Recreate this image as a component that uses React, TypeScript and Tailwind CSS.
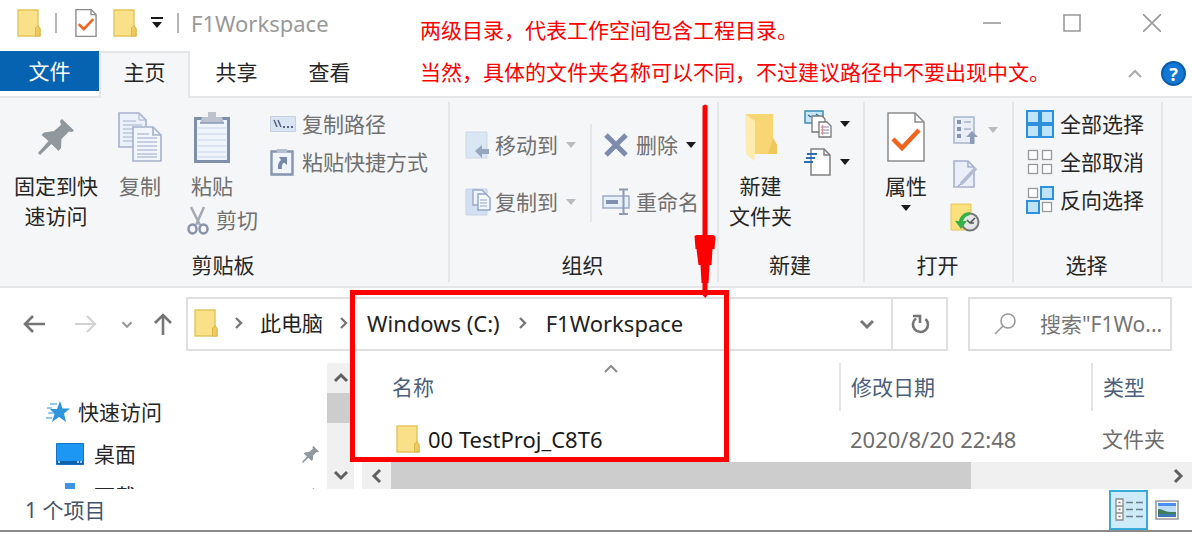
import type { ReactNode } from "react";

const chevronPaths = {
  up: "M2 9L8 3L14 9",
  down: "M2 3L8 9L14 3",
};

function Folder({ className = "w-6 h-7" }: { className?: string }) {
  return (
    <svg viewBox="0 0 24 28" className={`shrink-0 ${className}`} aria-hidden="true">
      <path d="M1 1h20v16l2 3v7H1z" fill="#fbe08a" stroke="#e3c35c" strokeWidth="1.4" />
      <path d="M18.5 27V19l2.5-2.5L23 20v7z" fill="#eecb5f" stroke="#dcb84c" />
    </svg>
  );
}

function Caret({ muted = false }: { muted?: boolean }) {
  return (
    <svg viewBox="0 0 10 6" className="w-2.5 h-1.5 shrink-0" aria-hidden="true">
      <path d="M0 0h10L5 6z" fill={muted ? "#b9bbbe" : "#1a1a1a"} />
    </svg>
  );
}

function Chevron({ dir, className }: { dir: "up" | "down"; className: string }) {
  return (
    <svg viewBox="0 0 16 12" className={`shrink-0 ${className}`} fill="none" stroke="currentColor" aria-hidden="true">
      <path d={chevronPaths[dir]} />
    </svg>
  );
}

function Crumb() {
  return (
    <svg viewBox="0 0 10 14" className="mx-4 w-2.5 h-3.5 shrink-0" aria-hidden="true">
      <path d="M2 2l5 5-5 5" fill="none" stroke="#777" strokeWidth="2.4" />
    </svg>
  );
}

function Pin({ className }: { className: string }) {
  return (
    <svg viewBox="0 0 36 36" className={className} aria-hidden="true">
      <path
        d="M24 0L36 11.500L34 13L31 12.500L23.500 20L23 29L20.500 32L13.500 25L2 36L0 34L10.500 22L3.500 16L6 13.500L16 12L23 6L22 2z"
        fill="#8f989c"
      />
    </svg>
  );
}

function CheckDoc({ className, thick }: { className: string; thick: number }) {
  return (
    <svg viewBox="0 0 38 50" className={className} fill="none" aria-hidden="true">
      <path d="M1 1h27l9 9v39H1z" fill="#fff" stroke="#8c8c8c" strokeWidth={thick} />
      <path d="M28 1v9h9" stroke="#8c8c8c" strokeWidth={thick} />
      <path d="M6 27l9 9 17-18" stroke="#f0641e" strokeWidth="4.5" />
    </svg>
  );
}

function CopyPages() {
  return (
    <svg viewBox="0 0 44 50" className="w-11 h-[50px]" fill="none" stroke="#a5b1cc" aria-hidden="true">
      <path d="M1 1h20l7 7v27H1z" fill="#eaf1fb" strokeWidth="1.600" />
      <path d="M21 1v7h7M5 9h13M5 13h19M5 17h19M5 21h19M5 25h19M5 29h19" />
      <path d="M15 15h20l8 8v26H15z" fill="#f1f6fd" strokeWidth="1.600" />
      <path d="M35 15v8h8" strokeWidth="1.600" />
      <path d="M19 22h12M19 26h20M19 30h20M19 34h20M19 38h20M19 42h20M19 45h20" stroke="#9aa8c4" />
    </svg>
  );
}

function Clipboard() {
  return (
    <svg viewBox="0 0 36 52" className="w-9 h-[52px]" aria-hidden="true">
      <path d="M1.500 7.500h33v43h-33z" fill="#f0f5fc" stroke="#7f8ea9" strokeWidth="3" />
      <path d="M4 17h28M4 23h28M4 29h28M4 35h28M4 41h28M4 46h28" stroke="#c6d4e8" />
      <path d="M8 6h6V1h8v5h6l2 6H6z" fill="#bcc3cf" />
      <path d="M6 12h24" stroke="#8796b0" strokeWidth="1.500" />
    </svg>
  );
}

function Scissors() {
  return (
    <svg viewBox="0 0 22 29" className="w-[22px] h-[29px]" fill="none" aria-hidden="true">
      <path d="M4 1l9 18M17 1L9 19" stroke="#a3a9b5" strokeWidth="2.500" />
      <ellipse cx="5.500" cy="23" rx="4" ry="4.500" stroke="#8993ab" strokeWidth="2.500" />
      <ellipse cx="16.500" cy="23" rx="4" ry="4.500" stroke="#8993ab" strokeWidth="2.500" />
    </svg>
  );
}

function CopyPath() {
  return (
    <svg viewBox="0 0 26 16" className="w-[26px] h-4" aria-hidden="true">
      <path d="M.5.500h25v15H.500z" fill="#dbe4f2" stroke="#c3cfe2" />
      <path d="M4 4l3 7M8 4l3 7" stroke="#56627e" strokeWidth="1.500" />
      <path d="M13 10h2v2h-2zM17 10h2v2h-2zM21 10h2v2h-2z" fill="#56627e" />
    </svg>
  );
}

function PasteShortcut() {
  return (
    <svg viewBox="0 0 24 28" className="w-6 h-7" aria-hidden="true">
      <path d="M1.500 3.500h21v23h-21z" fill="#f0f5fc" stroke="#8594b0" strokeWidth="2.400" />
      <path d="M7 1h10v4H7z" fill="#b6bfce" />
      <path d="M9 9h8v8l-3-2.500c-2 1.500-2.500 3.500-2 6.500H8c-.5-4 .5-7 3-9z" fill="#7787ab" />
    </svg>
  );
}

function MoveTo() {
  return (
    <svg viewBox="0 0 24 28" className="w-6 h-7" aria-hidden="true">
      <path d="M1 1h21v26H1z" fill="#dbe6f4" stroke="#cad7e8" />
      <path d="M10 20l7-6v4h7v5h-7v4z" fill="#96a6bd" />
    </svg>
  );
}

function CopyTo() {
  return (
    <svg viewBox="0 0 26 28" className="w-[26px] h-7" fill="none" aria-hidden="true">
      <path d="M1 1h21v26H1z" fill="#d3e0f1" stroke="#c6d4e8" />
      <path d="M8 2h9l3 3v12H8z" fill="#eef4fc" stroke="#9aabc9" strokeWidth="1.400" />
      <path d="M13 6h8l4 4v12H13z" fill="#f4f8fe" stroke="#92a4c4" strokeWidth="1.400" />
      <path d="M15 12h7M15 15h7M15 18h7" stroke="#92a4c4" />
    </svg>
  );
}

function Cross() {
  return (
    <svg viewBox="0 0 24 24" className="w-6 h-6" aria-hidden="true">
      <path d="M2 2l20 20M22 2L2 22" stroke="#7d8bad" strokeWidth="5" />
    </svg>
  );
}

function Rename() {
  return (
    <svg viewBox="0 0 28 28" className="w-7 h-7" fill="none" aria-hidden="true">
      <path d="M1 8h26v12H1z" fill="#e7eff9" stroke="#9dacc8" strokeWidth="1.500" />
      <path d="M4 12h12v4H4z" fill="#8090ae" />
      <path d="M17 1.500h9M17 26h9M21.500 2v24" stroke="#8c9ab5" strokeWidth="2" />
    </svg>
  );
}

function OpenFolder() {
  return (
    <svg viewBox="0 0 34 50" className="w-[34px] h-[50px]" aria-hidden="true">
      <path d="M2 2h27v24l4 7v9H9z" fill="#f8d674" />
      <path d="M29 26l4 7v9H24z" fill="#f0c75c" />
      <path d="M1 2l10 7v33l-1 7-8-7z" fill="#fdebaf" />
    </svg>
  );
}

function NewItem() {
  return (
    <svg viewBox="0 0 28 28" className="w-7 h-7" fill="none" aria-hidden="true">
      <path d="M1 1h18v12H1z" fill="#c9e7f7" stroke="#3f8db5" strokeWidth="1.500" />
      <path d="M4 5l3 2M12 4l4 3" stroke="#2c6d99" strokeWidth="1.500" />
      <path d="M8 6h10l3 3v13H8z" fill="#fff" stroke="#777" strokeWidth="1.300" />
      <path d="M15 12h8l4 4v11H15z" fill="#fff" stroke="#777" strokeWidth="1.300" />
      <path d="M17 17h8M17 20h8M17 23h8" stroke="#7d86b4" />
      <path d="M18.500 15v10" stroke="#d58a8a" />
    </svg>
  );
}

function EasyAccess() {
  return (
    <svg viewBox="0 0 28 28" className="w-7 h-7" fill="none" aria-hidden="true">
      <path d="M7 1h13l6 6v20H7z" fill="#fff" stroke="#808080" strokeWidth="1.500" />
      <path d="M20 1v6h6" stroke="#808080" strokeWidth="1.500" />
      <path d="M3 6h10M2 10h9M0 14h9" stroke="#2a6fb5" strokeWidth="2" />
    </svg>
  );
}

function OpenWith() {
  return (
    <svg viewBox="0 0 26 28" className="w-[26px] h-7" fill="none" aria-hidden="true">
      <path d="M1 1h20v26H1z" fill="#e9eef8" stroke="#a9b5cd" strokeWidth="1.500" />
      <path d="M4 4h4v4H4zM4 11h4v4H4zM4 18h4v4H4z" fill="#8592b0" />
      <path d="M11 6h7M11 13h7" stroke="#a9b5cd" strokeWidth="1.500" />
      <path d="M19 15l6 6h-4v7h-4v-7h-4z" fill="#8f9cb8" />
    </svg>
  );
}

function EditDoc() {
  return (
    <svg viewBox="0 0 26 28" className="w-[26px] h-7" fill="none" aria-hidden="true">
      <path d="M1 1h14l6 6v20H1z" fill="#e9eef8" stroke="#a5b1ca" strokeWidth="1.600" />
      <path d="M15 1v6h6" stroke="#a5b1ca" strokeWidth="1.600" />
      <path d="M23 8L8 24" stroke="#b1bcd3" strokeWidth="3.500" />
      <path d="M8 24l-3 2" stroke="#8592b0" />
    </svg>
  );
}

function History() {
  return (
    <svg viewBox="0 0 30 30" className="w-[30px] h-[30px]" fill="none" aria-hidden="true">
      <path d="M1 1h20v26H1z" fill="#fbe07e" stroke="#e8c656" />
      <circle cx="20" cy="19" r="8.500" fill="#e6e6e6" stroke="#777" strokeWidth="2" />
      <path d="M20 20l5-5M17 17l3 3h4" stroke="#555" strokeWidth="1.500" />
      <path d="M20 9c-6 0-10 4-11 9H5l6 8 6-8h-4c1-3 3-5 7-6z" fill="#36b24a" />
    </svg>
  );
}

function SelectGrid({ on }: { on: boolean[] }) {
  return (
    <svg viewBox="0 0 28 28" className="w-7 h-7" aria-hidden="true">
      {on.map((active, i) => {
        const x = (i % 2) * 14;
        const y = Math.floor(i / 2) * 14;
        return active ? (
          <rect key={i} x={x + 1} y={y + 1} width="12" height="12" fill="#bfe3fb" stroke="#2e8fdc" strokeWidth="2" />
        ) : (
          <rect key={i} x={x + 2.5} y={y + 2.5} width="9" height="9" fill="#fff" stroke="#999" strokeWidth="1.3" />
        );
      })}
    </svg>
  );
}

function Group({ label, className, children }: { label: string; className: string; children: ReactNode }) {
  return (
    <section aria-label={label} className={`flex shrink-0 flex-col border-r-2 border-[#e4e6e8] ${className}`}>
      <div className="flex h-[148px] items-start pt-[3px]">{children}</div>
      <div className="pr-0.5 pb-0.5 text-center leading-[30px]">{label}</div>
    </section>
  );
}

function BigButton({ icon, muted, children }: { icon: ReactNode; muted?: boolean; children: ReactNode }) {
  return (
    <button
      type="button"
      className={`flex shrink-0 flex-col items-center whitespace-nowrap pt-1.5 leading-[30px] ${muted ? "text-[#707070]" : ""}`}
    >
      <span className="mb-2 flex h-[52px] items-center">{icon}</span>
      {children}
    </button>
  );
}

function SmallButton({
  icon,
  muted,
  caret,
  slot = "w-8",
  height = "h-[38px]",
  children,
}: {
  icon: ReactNode;
  muted?: boolean;
  caret?: "dark" | "muted";
  slot?: string;
  height?: string;
  children?: ReactNode;
}) {
  return (
    <button
      type="button"
      className={`flex items-center whitespace-nowrap ${height} ${muted ? "text-[#707070]" : ""}`}
    >
      <span className={`flex shrink-0 ${slot}`}>{icon}</span>
      {children}
      {caret && (
        <span className="ml-2">
          <Caret muted={caret === "muted"} />
        </span>
      )}
    </button>
  );
}

function TitleBar() {
  return (
    <header className="flex h-[51px] items-center">
      <div className="flex items-center pl-[17px] pb-1.5">
        <Folder />
        <span className="ml-3.5 h-5 w-0.5 bg-[#b5b5b5]" />
        <button type="button" aria-label="属性" className="ml-[18px]">
          <CheckDoc className="w-[22px] h-7" thick={2.5} />
        </button>
        <button type="button" aria-label="新建文件夹" className="ml-4">
          <Folder />
        </button>
        <button type="button" aria-label="自定义快速访问工具栏" className="ml-3.5">
          <svg viewBox="0 0 12 12" className="w-3 h-3">
            <path d="M0 0h12v2H0zM1 5h10l-5 6z" fill="#1a1a1a" />
          </svg>
        </button>
        <span className="ml-3.5 h-5 w-0.5 bg-[#b5b5b5]" />
        <h1 className="ml-3 text-[22px] text-[#999]">F1Workspace</h1>
      </div>
      <div className="ml-auto flex items-center gap-[62px] pr-[31px] pb-1.5 text-[#999]">
        <button type="button" aria-label="最小化">
          <svg viewBox="0 0 18 18" className="w-[18px] h-[18px]" stroke="currentColor">
            <path d="M0 9h18" strokeWidth="1.600" />
          </svg>
        </button>
        <button type="button" aria-label="最大化">
          <svg viewBox="0 0 18 18" className="w-[18px] h-[18px]" stroke="currentColor" fill="none">
            <path d="M1 1h16v16H1z" strokeWidth="1.600" />
          </svg>
        </button>
        <button type="button" aria-label="关闭">
          <svg viewBox="0 0 18 18" className="w-[18px] h-[18px]" stroke="currentColor">
            <path d="M0 0l18 18M18 0L0 18" strokeWidth="1.600" />
          </svg>
        </button>
      </div>
    </header>
  );
}

function TabBar() {
  return (
    <nav className="flex h-[45px]">
      <button type="button" className="h-10 w-[99px] bg-[#0563b1] text-white">
        文件
      </button>
      <button
        type="button"
        className="relative -mb-0.5 w-[91px] border-x-2 border-t-2 border-[#e4e6e8] bg-[#f5f6f7] pb-2"
      >
        主页
      </button>
      <button type="button" className="w-[93px] pb-1">
        共享
      </button>
      <button type="button" className="w-[93px] pb-1">
        查看
      </button>
      <div className="ml-auto flex items-center gap-[18px] pr-[6px]">
        <button type="button" aria-label="折叠功能区">
          <Chevron dir="up" className="w-4 h-3 stroke-2 text-[#aaa]" />
        </button>
        <button
          type="button"
          aria-label="帮助"
          className="h-[25px] w-[25px] rounded-full border-2 border-[#0a5cad] bg-[#1377d4] text-lg leading-5 font-bold text-white"
        >
          ?
        </button>
      </div>
    </nav>
  );
}

function Ribbon() {
  return (
    <div className="flex border-y-2 border-[#e4e6e8] bg-[#f5f6f7] py-1">
      <Group label="剪贴板" className="w-[450px]">
        <div className="flex pl-3.5">
          <BigButton icon={<Pin className="w-9 h-9" />}>
            <span>固定到快</span>
            <span>速访问</span>
          </BigButton>
          <div className="ml-5 flex">
            <BigButton muted icon={<CopyPages />}>
              复制
            </BigButton>
          </div>
          <div className="ml-[25px] w-[71px]">
            <div className="pl-1">
              <BigButton muted icon={<Clipboard />}>
                粘贴
              </BigButton>
            </div>
            <SmallButton muted icon={<Scissors />} slot="w-[29px]">
              剪切
            </SmallButton>
          </div>
          <div className="ml-3">
            <SmallButton muted icon={<CopyPath />}>
              复制路径
            </SmallButton>
            <SmallButton muted icon={<PasteShortcut />}>
              粘贴快捷方式
            </SmallButton>
          </div>
        </div>
      </Group>
      <Group label="组织" className="w-[269px]">
        <div className="flex w-full pt-[11px] pl-[15px]">
          <div>
            <SmallButton muted caret="muted" icon={<MoveTo />} slot="w-[30px]" height="h-[57px]">
              移动到
            </SmallButton>
            <SmallButton muted caret="muted" icon={<CopyTo />} slot="w-[30px]" height="h-[57px]">
              复制到
            </SmallButton>
          </div>
          <span className="mt-2 ml-3.5 h-[98px] w-0.5 bg-[#e4e6e8]" />
          <div className="ml-2.5">
            <SmallButton muted caret="dark" icon={<Cross />} slot="w-[34px] pl-0.5" height="h-[57px]">
              删除
            </SmallButton>
            <SmallButton muted icon={<Rename />} slot="w-[34px]" height="h-[57px]">
              重命名
            </SmallButton>
          </div>
        </div>
      </Group>
      <Group label="新建" className="w-[146px]">
        <div className="flex pl-2.5">
          <BigButton icon={<OpenFolder />}>
            <span>新建</span>
            <span>文件夹</span>
          </BigButton>
          <div className="ml-3">
            <SmallButton caret="dark" slot="w-7" icon={<NewItem />} />
            <SmallButton caret="dark" slot="w-7" icon={<EasyAccess />} />
          </div>
        </div>
      </Group>
      <Group label="打开" className="w-[149px]">
        <div className="flex pl-5">
          <BigButton icon={<CheckDoc className="w-[38px] h-[50px]" thick={1.5} />}>
            <span className="mb-1">属性</span>
            <Caret />
          </BigButton>
          <div className="ml-[23px] pt-[3px]">
            <SmallButton caret="muted" slot="w-[30px] pl-[3px]" height="h-11" icon={<OpenWith />} />
            <SmallButton slot="w-[30px] pl-[3px]" height="h-11" icon={<EditDoc />} />
            <SmallButton slot="w-[30px]" height="h-11" icon={<History />} />
          </div>
        </div>
      </Group>
      <Group label="选择" className="w-[149px]">
        <div className="pl-3">
          <SmallButton slot="w-[34px]" icon={<SelectGrid on={[true, true, true, true]} />}>
            全部选择
          </SmallButton>
          <SmallButton slot="w-[34px]" icon={<SelectGrid on={[false, false, false, false]} />}>
            全部取消
          </SmallButton>
          <SmallButton slot="w-[34px]" icon={<SelectGrid on={[false, true, true, false]} />}>
            反向选择
          </SmallButton>
        </div>
      </Group>
    </div>
  );
}

function AddressBar() {
  return (
    <div className="flex pt-[9px] pr-5 pb-3">
      <div className="flex w-[186px] shrink-0 items-center pl-[23px]">
        <button type="button" aria-label="后退">
          <svg viewBox="0 0 22 20" className="w-[22px] h-5" fill="none" stroke="#757575" strokeWidth="2.600">
            <path d="M22 10H2M10 2l-8 8 8 8" />
          </svg>
        </button>
        <button type="button" aria-label="前进" className="ml-[30px]">
          <svg viewBox="0 0 22 20" className="w-[22px] h-5" fill="none" stroke="#d2d2d2" strokeWidth="2.200">
            <path d="M0 10h20M12 2l8 8-8 8" />
          </svg>
        </button>
        <button type="button" aria-label="最近浏览的位置" className="ml-6">
          <Chevron dir="down" className="w-3 h-[9px] stroke-3 text-[#999]" />
        </button>
        <button type="button" aria-label="上移" className="ml-5">
          <svg viewBox="0 0 20 22" className="w-5 h-[22px]" fill="none" stroke="#757575" strokeWidth="2.600">
            <path d="M10 22V2M2 10l8-8 8 8" />
          </svg>
        </button>
      </div>
      <div className="flex h-[54px] min-w-0 grow items-center border-2 border-[#dfdfdf] text-[#222]">
        <div className="flex min-w-0 items-center pb-0.5 pl-1.5 whitespace-nowrap">
          <Folder />
          <Crumb />
          <a href="#pc">此电脑</a>
          <Crumb />
          <a href="#c" className="pr-0.5 pl-0.5 text-[22px]">
            Windows (C:)
          </a>
          <Crumb />
          <a href="#f1" className="pl-0.5 text-[22px]">
            F1Workspace
          </a>
        </div>
        <button type="button" aria-label="上一个位置" className="mr-4 ml-auto">
          <Chevron dir="down" className="w-4 h-3 stroke-3 text-[#777]" />
        </button>
        <button
          type="button"
          aria-label="刷新"
          className="flex h-full w-[55px] items-center justify-center border-l-2 border-[#dfdfdf]"
        >
          <svg viewBox="0 0 20 20" className="w-5 h-5" fill="none" stroke="#757575" strokeWidth="2.600">
            <path d="M15.500 5A7.500 7.500 0 1 1 6 4.500" />
            <path d="M3 2h7v7" />
          </svg>
        </button>
      </div>
      <label className="ml-5 flex h-[54px] w-[204px] shrink-0 items-center border-2 border-[#dfdfdf] pl-6">
        <svg viewBox="0 0 22 22" className="w-[22px] h-[22px] shrink-0" fill="none" stroke="#999" strokeWidth="1.600">
          <circle cx="14" cy="8" r="7" />
          <path d="M9 13l-8 8" />
        </svg>
        <input
          type="text"
          aria-label="搜索"
          placeholder={'搜索"F1Wo...'}
          className="ml-6 w-full min-w-0 outline-none placeholder:text-[#757575]"
        />
      </label>
    </div>
  );
}

function Sidebar() {
  return (
    <div className="flex w-[354px] shrink-0">
      <ul className="min-w-0 grow overflow-hidden pt-7 leading-[42px]">
        <li className="flex items-center pl-[46px]">
          <svg viewBox="0 0 24 22" className="w-6 h-[22px]" aria-hidden="true">
            <path d="M14 0l2.500 7.500H24l-6 5L20 21l-7-5-7 5 2.500-8L4 8h7z" fill="#2f94dc" />
            <path d="M4 3h7M1 7h5M2 12h6M0 17h6" stroke="#6db8ea" strokeWidth="1.500" />
          </svg>
          <a href="#quick" className="ml-2">
            快速访问
          </a>
        </li>
        <li className="flex items-center pr-2 pl-14">
          <svg viewBox="0 0 28 22" className="w-7 h-[22px]" aria-hidden="true">
            <path d="M.500.500h27v21H.500z" fill="#1c97f3" stroke="#1373c4" />
            <path d="M1 18h26v3H1z" fill="#0c62ad" />
            <path d="M2 19h2M21 19h2M24 19h2" stroke="#d8efff" strokeWidth="1.500" />
          </svg>
          <a href="#desktop" className="ml-2.5">
            桌面
          </a>
          <Pin className="ml-auto w-[17px] h-[17px]" />
        </li>
        <li className="flex h-[42px] items-center pr-2 pl-14">
          <svg viewBox="0 0 28 26" className="w-7 h-[26px]" aria-hidden="true">
            <path d="M9 0h10v11h7L14 24 2 11h7z" fill="#3f93e2" />
          </svg>
          <a href="#downloads" className="ml-2.5">
            下载
          </a>
          <Pin className="ml-auto w-[17px] h-[17px]" />
        </li>
      </ul>
      <div className="flex w-[27px] shrink-0 flex-col bg-[#f0f0f0] text-[#606060]">
        <button type="button" aria-label="向上滚动" className="flex h-[30px] items-center justify-center">
          <Chevron dir="up" className="w-4 h-3 stroke-3" />
        </button>
        <div className="h-[30px] bg-[#cdcdcd]" />
        <button type="button" aria-label="向下滚动" className="mt-auto flex h-7 items-center justify-center">
          <Chevron dir="down" className="w-4 h-3 stroke-3" />
        </button>
      </div>
    </div>
  );
}

function FileList() {
  return (
    <div className="ml-2 flex min-w-0 grow flex-col">
      <div className="h-[99px] pl-[21px]">
        <table className="w-full table-fixed text-left">
          <thead className="text-[#4c607a]">
            <tr className="h-12">
              <th className="relative w-[457px] border-r-2 border-[#e5e5e5] pl-[9px] font-normal">
                名称
                <Chevron dir="up" className="absolute inset-x-0 top-0 mx-auto w-4 h-3 stroke-2 text-[#8a8a8a]" />
              </th>
              <th className="w-[252px] border-r-2 border-[#e5e5e5] pl-2.5 font-normal">修改日期</th>
              <th className="pl-2.5 font-normal">类型</th>
            </tr>
          </thead>
          <tbody>
            <tr className="h-[51px] text-[#6d6d6d]">
              <td className="pt-1 pl-[13px]">
                <a href="#00" className="flex items-center text-[22px] leading-[30px] text-[#1a1a1a]">
                  <Folder />
                  <span className="ml-2">00 TestProj_C8T6</span>
                </a>
              </td>
              <td className="pt-1 pl-2.5 text-[22px] leading-[30px]">2020/8/20 22:48</td>
              <td className="pt-1 pl-2.5">文件夹</td>
            </tr>
          </tbody>
        </table>
      </div>
      <div className="flex h-[27px] bg-[#f0f0f0] text-[#606060]">
        <button type="button" aria-label="向左滚动" className="flex w-[29px] items-center justify-center">
          <Chevron dir="up" className="w-4 h-3 -rotate-90 stroke-3" />
        </button>
        <div className="grow">
          <div className="h-full w-3/4 bg-[#cdcdcd]" />
        </div>
        <button type="button" aria-label="向右滚动" className="flex w-7 items-center justify-center">
          <Chevron dir="up" className="w-4 h-3 rotate-90 stroke-3" />
        </button>
      </div>
    </div>
  );
}

function StatusBar() {
  return (
    <footer className="flex h-[43px] items-center border-b-2 border-[#8b8b8b] pr-[13px] pl-[25px] text-[#44546a]">
      <span>1 个项目</span>
      <button
        type="button"
        aria-label="详细信息"
        className="ml-auto flex h-10 w-[39px] items-center justify-center border-2 border-[#3ba9d6] bg-[#cdebf8]"
      >
        <svg viewBox="0 0 28 24" className="w-7 h-6" fill="none">
          <path d="M1 1h7v7H1zM1 8h7v7H1zM1 15h7v7H1z" fill="#fff" stroke="#8a8a8a" strokeWidth="1.300" />
          <path d="M3.500 4.500h2M3.500 11.500h2M3.500 18.500h2" stroke="#777" strokeWidth="1.500" />
          <path d="M11 4.500h7M21 4.500h7M11 11.500h7M21 11.500h7M11 18.500h7M21 18.500h7" stroke="#6d7f8a" strokeWidth="1.600" />
        </svg>
      </button>
      <button type="button" aria-label="大缩略图" className="ml-[7px]">
        <svg viewBox="0 0 24 20" className="w-6 h-5">
          <path d="M1 1h22v18H1z" fill="#fff" stroke="#999" strokeWidth="1.600" />
          <path d="M3 3h18v14H3z" fill="#bcdcf8" />
          <path d="M3 3h18v3H3z" fill="#4a8ff0" />
          <path d="M3 9c5 0 7 3 12 3h6v2H3z" fill="#3f7d5c" />
          <path d="M3 14h18v3H3z" fill="#3c78b4" />
        </svg>
      </button>
    </footer>
  );
}

// 红色标注：说明文字、箭头和方框
function Annotations() {
  return (
    <div className="pointer-events-none">
      <p className="absolute top-[9px] left-[420px] leading-[42px] whitespace-nowrap text-[#f00]">
        两级目录，代表工作空间包含工程目录。
        <br />
        当然，具体的文件夹名称可以不同，不过建议路径中不要出现中文。
      </p>
      <div className="absolute top-[290px] left-[350px] h-[172px] w-[379px] border-[5px] border-[#f00]" />
      <svg viewBox="0 0 22 194" className="absolute top-[104px] left-[694px] h-[194px] w-[22px]" aria-hidden="true">
        <path
          d="M8.500 2q3-3 5 0v129h6l2 2-1 12h-2l-1 16h-2l-1 18h-1v12l-2 3-3-3v-12h-1l-1-18h-2l-2-16h-1l-1-13 2-1h6z"
          fill="#f00"
        />
      </svg>
    </div>
  );
}

export default function App() {
  return (
    <div className="relative min-h-screen overflow-hidden bg-white font-['Noto_Sans','Noto_Sans_CJK_SC',sans-serif] text-[21px] leading-[30px] text-[#262626]">
      <TitleBar />
      <TabBar />
      <Ribbon />
      <AddressBar />
      <main className="flex h-[126px]">
        <Sidebar />
        <FileList />
      </main>
      <StatusBar />
      <Annotations />
    </div>
  );
}
